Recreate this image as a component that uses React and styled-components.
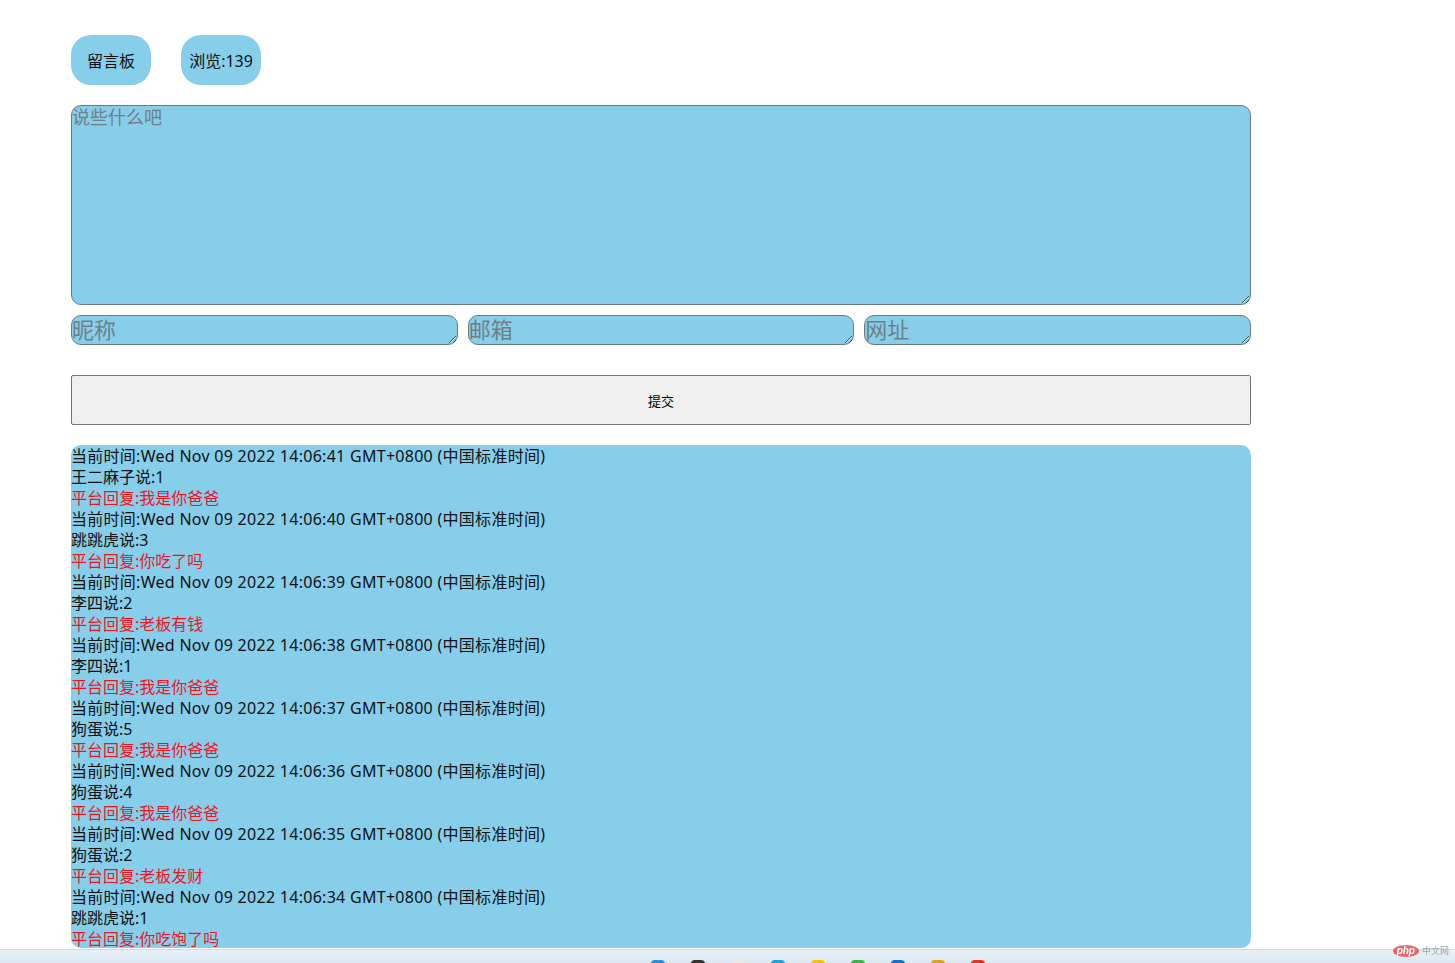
import React from 'react';
import styled, { createGlobalStyle } from 'styled-components';

const GlobalStyle = createGlobalStyle`
  html, body {
    margin: 0;
    padding: 0;
    background: #ffffff;
    font-family: "Noto Sans", "Noto Sans CJK SC", sans-serif;
  }
`;

const Page = styled.div`
  width: 1180px;
  padding: 35px 0 0 71px;
  display: flex;
  flex-direction: column;
`;

const TopBar = styled.div`
  display: flex;
  gap: 30px;
  margin-bottom: 20px;
`;

const Pill = styled.div`
  width: 80px;
  height: 50px;
  border-radius: 20px;
  background: #87ceeb;
  display: flex;
  align-items: center;
  justify-content: center;
  font-size: 16px;
  color: #111;
`;

const Area = styled.textarea`
  box-sizing: border-box;
  width: 100%;
  height: ${(p) => p.h}px;
  margin: 0;
  padding: 0;
  border: 1px solid #6b7a82;
  border-radius: 10px;
  background: #87ceeb;
  font-family: "Noto Sans CJK SC", serif;
  font-size: ${(p) => p.fs}px;
  line-height: 1.15;
  color: #222;
  outline: none;

  &::placeholder {
    color: #6e7f86;
  }
`;

const Fields = styled.div`
  display: grid;
  grid-template-columns: repeat(3, 1fr);
  gap: 10px;
  margin: 10px 0 30px;
`;

const Submit = styled.button`
  height: 50px;
  width: 100%;
  border: 1px solid #767676;
  border-radius: 2px;
  background: #efefef;
  font-family: "Noto Sans CJK SC", sans-serif;
  font-size: 13px;
  color: #000;
  margin-bottom: 20px;
`;

const List = styled.div`
  background: #87ceeb;
  border-radius: 10px;
  height: 503px;
  overflow: hidden;
  padding-top: 1px;
  box-sizing: border-box;
`;

const Line = styled.div`
  height: 21px;
  line-height: 21px;
  font-size: 16px;
  letter-spacing: ${(p) => (p.stamp ? '0.28px' : '0')};
  color: ${(p) => (p.reply ? '#f0141e' : '#111')};
  white-space: nowrap;
`;

const Taskbar = styled.div`
  position: fixed;
  left: 0;
  right: 0;
  top: 949px;
  height: 14px;
  background: linear-gradient(#e6f1f7, #d9e9f1);
  border-top: 1px solid #c9dde8;
  display: flex;
  align-items: flex-end;
  justify-content: center;
  gap: 26px;
  padding-left: 180px;
`;

const TrayIcon = styled.span`
  width: 14px;
  height: 4px;
  border-radius: 6px 6px 0 0;
  background: ${(p) => p.c};
`;

const Watermark = styled.div`
  position: fixed;
  right: 6px;
  top: 944px;
  display: flex;
  align-items: center;
  gap: 3px;
  font-family: "Noto Sans CJK SC", sans-serif;
  font-size: 9px;
  color: #9aa4aa;
`;

const PhpLogo = styled.span`
  background: #e8666e;
  color: #fff;
  font-family: "Liberation Sans", sans-serif;
  font-weight: bold;
  font-style: italic;
  font-size: 10px;
  line-height: 12px;
  padding: 0 4px;
  border-radius: 50%;
`;

const messages = [
  ['41', '王二麻子说:1', '我是你爸爸'],
  ['40', '跳跳虎说:3', '你吃了吗'],
  ['39', '李四说:2', '老板有钱'],
  ['38', '李四说:1', '我是你爸爸'],
  ['37', '狗蛋说:5', '我是你爸爸'],
  ['36', '狗蛋说:4', '我是你爸爸'],
  ['35', '狗蛋说:2', '老板发财'],
  ['34', '跳跳虎说:1', '你吃饱了吗'],
];

export default function App() {
  return (
    <>
      <GlobalStyle />
      <Page>
        <TopBar>
          <Pill>留言板</Pill>
          <Pill>浏览:139</Pill>
        </TopBar>
        <Area h={200} fs={18} placeholder="说些什么吧" />
        <Fields>
          <Area h={30} fs={22} placeholder="昵称" />
          <Area h={30} fs={22} placeholder="邮箱" />
          <Area h={30} fs={22} placeholder="网址" />
        </Fields>
        <Submit>提交</Submit>
        <List>
          {messages.map(([sec, who, reply]) => (
            <React.Fragment key={sec}>
              <Line stamp>当前时间:Wed Nov 09 2022 14:06:{sec} GMT+0800 (中国标准时间)</Line>
              <Line>{who}</Line>
              <Line reply>平台回复:{reply}</Line>
            </React.Fragment>
          ))}
        </List>
      </Page>
      <Taskbar>
        {['#2b8fd6', '#333', '#e8e8e8', '#1aa3d9', '#f2c300', '#3bb34a', '#1b6fc4', '#e0a020', '#e03030'].map((c, i) => (
          <TrayIcon key={i} c={c} />
        ))}
      </Taskbar>
      <Watermark>
        <PhpLogo>php</PhpLogo>
        中文网
      </Watermark>
    </>
  );
}
